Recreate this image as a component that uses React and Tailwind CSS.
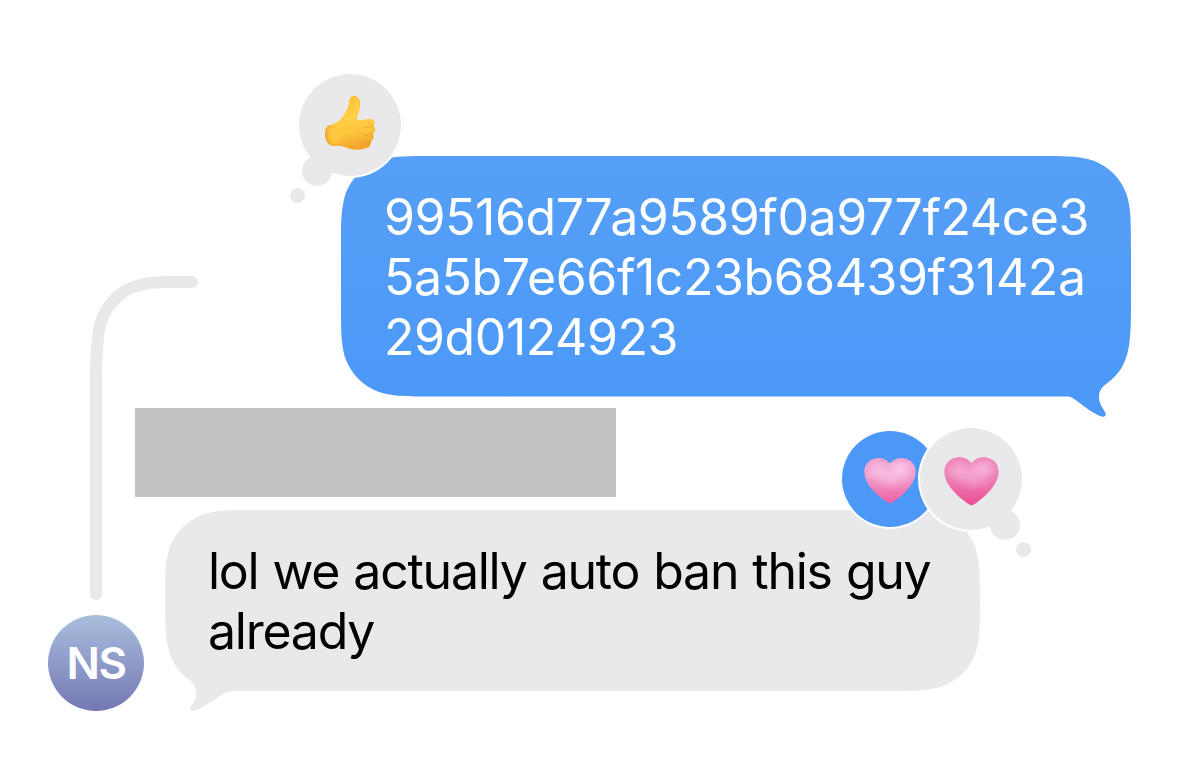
import React from 'react';

// Bubble outlines, tail included
const SENT_CLIP =
  "[clip-path:path('M91.7,0_H698.3_C724.7,0_737.9,0_752.1,4.5_C767.6,10.1_779.9,22.4_785.5,37.9_C790,52.1_790,65.3_790,91.7_V150_C790,184_788,196_783,207_C779,216_773,222_765,228_C757,234_756,242_761,251_C764,256_766,258_764,260_C762,263_750,256_740,248_C733,243_731,240.5_726,240.5_H91.7_C65.3,240.5_52.1,240.5_37.9,236_C22.4,230.4_10.1,218.1_4.5,202.6_C0,188.4_0,175.2_0,148.8_V91.7_C0,65.3_0,52.1_4.5,37.9_C10.1,22.4_22.4,10.1_37.9,4.5_C52.1,0_65.3,0_91.7,0_Z')]";

const RECEIVED_CLIP =
  "[clip-path:path('M91.7,0_H723.3_C749.7,0_762.9,0_777.1,4.5_C792.6,10.1_804.9,22.4_810.5,37.9_C815,52.1_815,65.3_815,90.5_C815,115.7_815,128.9_810.5,143.1_C804.9,158.6_792.6,170.9_777.1,176.5_C762.9,181_749.7,181_723.3,181_H68_C60,181_57,185_49,190_C40,196_30,202_26,201_C24,200_24.5,199_27,195_C34,185_32,178_26,171_C18,165_12,160_8,151_C2,139_0,125_0,91.7_C0,65.3_0,52.1_4.5,37.9_C10.1,22.4_22.4,10.1_37.9,4.5_C52.1,0_65.3,0_91.7,0_Z')]";

const ThumbsUp = () => (
  <svg viewBox="57 42 306 306" className="h-[102px] w-[102px]">
    <defs>
      <linearGradient id="skin" x1="0.1" y1="0" x2="0.3" y2="1">
        <stop offset="0" stopColor="#f9bd35" />
        <stop offset="0.45" stopColor="#ffcf45" />
        <stop offset="0.75" stopColor="#fcc53c" />
        <stop offset="1" stopColor="#f3a52c" />
      </linearGradient>
      <radialGradient id="wrist" cx="0.75" cy="0.4" r="0.75">
        <stop offset="0" stopColor="#ffcd43" />
        <stop offset="0.6" stopColor="#fcc13a" />
        <stop offset="1" stopColor="#eda22f" />
      </radialGradient>
    </defs>
    <path
      d="M150 195 C168 190 180 182 190 167 C201 151 205 140 208 122 C210 108 220 105 229 109 C239 114 242 127 240 141 C238 157 233 167 229 180 C244 182 257 177 270 177 C284 177 288 188 281 197 C289 204 287 217 279 221 C284 230 281 241 273 243 C274 257 268 264 257 265 C240 271 224 270 208 266 C192 262 182 256 165 258 C147 259 135 243 135 223 C136 207 141 197 150 195 Z"
      fill="url(#skin)"
    />
    <path d="M150 195 C162 193 173 204 178 222 C180 238 177 254 165 258 C147 260 135 243 135 223 C135 207 141 197 150 195 Z" fill="url(#wrist)" />
    <g fill="none" stroke="#e69a2c" strokeWidth="3" strokeLinecap="round" opacity="0.65">
      <path d="M280 198 C271 202 263 201 254 203" />
      <path d="M278 222 C269 226 260 225 252 227" />
      <path d="M272 244 C265 247 258 246 250 248" />
    </g>
    <path d="M227 118 C234 126 231 146 220 172" fill="none" stroke="#ffdb58" strokeWidth="5" strokeLinecap="round" opacity="0.5" />
  </svg>
);

const Heart = ({ id, light, mid, deep }) => (
  <svg viewBox="0 0 166 148" className="block h-full w-full">
    <defs>
      <linearGradient id={`${id}-base`} x1="0" y1="0" x2="0" y2="1">
        <stop offset="0" stopColor={mid} />
        <stop offset="0.4" stopColor={mid} />
        <stop offset="1" stopColor={deep} />
      </linearGradient>
      <radialGradient id={`${id}-shine`} cx="0.5" cy="0.5" r="0.5">
        <stop offset="0" stopColor={light} />
        <stop offset="0.4" stopColor={light} stopOpacity="0.7" />
        <stop offset="1" stopColor={light} stopOpacity="0" />
      </radialGradient>
    </defs>
    <path
      d="M83 20 C73 7 59 1 43 2 C17 4 0 23 1 49 C3 82 31 111 62 135 C70 141 79 147 83 147 C87 147 96 141 104 135 C135 111 163 82 165 49 C166 23 149 4 123 2 C107 1 93 7 83 20 Z"
      fill={`url(#${id}-base)`}
    />
    <ellipse cx="44" cy="42" rx="42" ry="36" fill={`url(#${id}-shine)`} opacity="0.7" />
    <ellipse cx="118" cy="36" rx="44" ry="34" fill={`url(#${id}-shine)`} />
    <ellipse cx="88" cy="58" rx="62" ry="46" fill={`url(#${id}-shine)`} opacity="0.7" />
  </svg>
);

const Avatar = () => (
  <div className="mt-[15px] flex h-24 w-24 shrink-0 items-center justify-center rounded-full bg-linear-to-b from-[#a9bedd] to-[#7478b4]">
    <span className="text-[44px] leading-none font-semibold tracking-[-1.5px] text-white">NS</span>
  </div>
);

const App = () => {
  return (
    <div className="flex h-[766px] w-[1179px] overflow-hidden bg-white pl-12 font-['Inter',sans-serif]">
      {/* Reply thread line and sender */}
      <div className="flex w-[87px] shrink-0 flex-col pt-[276px]">
        <svg viewBox="0 0 108 324" className="ml-[42px] h-[324px] w-[108px] shrink-0">
          <path
            d="M102 6 H80 C53 6 38 10 25 23 C13 35 9 48 8 62 C6.5 75 6 85 6 100 V318"
            fill="none"
            stroke="#e9e9e9"
            strokeWidth="12"
            strokeLinecap="round"
          />
        </svg>
        <Avatar />
      </div>

      <div className="flex flex-1 flex-col items-start pt-[156px]">
        {/* Sent message */}
        <div className="relative ml-[206px]">
          <div className={`h-[262px] w-[790px] bg-linear-to-b from-[#569ff6] to-[#4b98f8] pt-[31px] pl-[43px] ${SENT_CLIP}`}>
            <p className="text-[50px] leading-[60px] tracking-[-0.44px] whitespace-nowrap text-white">
              99516d77a9589f0a977f24ce3
              <br />
              5a5b7e66f1c23b68439f3142a
              <br />
              29d0124923
            </p>
          </div>
          <div className="absolute -top-[82px] -left-[42px] h-[102px] w-[102px] rounded-full bg-[#e9e9eb] ring-2 ring-white">
            <ThumbsUp />
            <span className="absolute top-[82px] left-[3px] h-[30px] w-[30px] rounded-full bg-[#e9e9eb]" />
            <span className="absolute top-[114px] -left-[9px] h-[15px] w-[15px] rounded-full bg-[#e9e9eb]" />
          </div>
        </div>

        {/* Redacted quote */}
        <div className="-mt-[10px] h-[89px] w-[481px] bg-[#c2c2c2]" />

        {/* Received message */}
        <div className="relative mt-[13px] ml-[30px]">
          <div className={`h-[202px] w-[815px] bg-[#e9e9eb] pt-[31px] pl-[43px] ${RECEIVED_CLIP}`}>
            <p className="text-[50px] leading-[60px] tracking-[-1.25px] [word-spacing:1.3px] whitespace-nowrap text-black">
              lol we actually auto ban this guy
              <br />
              already
            </p>
          </div>
          <div className="absolute -top-[79px] left-[677px] flex h-24 w-24 items-center justify-center rounded-full bg-[#4c98f7] pt-[3px] ring-2 ring-white">
            <div className="h-[47px] w-[52px]">
              <Heart id="heart-sent" light="#fac4e6" mid="#f19fce" deep="#ee5fa2" />
            </div>
          </div>
          <div className="absolute -top-[82px] left-[755px] flex h-[102px] w-[102px] items-center justify-center rounded-full bg-[#e9e9eb] pt-[4px] ring-2 ring-white">
            <div className="h-[50px] w-[55px]">
              <Heart id="heart-received" light="#f8afd8" mid="#ec85b8" deep="#ec4c94" />
            </div>
            <span className="absolute top-[82px] left-[70px] h-[30px] w-[30px] rounded-full bg-[#e9e9eb]" />
            <span className="absolute top-[114px] left-[96px] h-[15px] w-[15px] rounded-full bg-[#e9e9eb]" />
          </div>
        </div>
      </div>
    </div>
  );
};

export default App;
